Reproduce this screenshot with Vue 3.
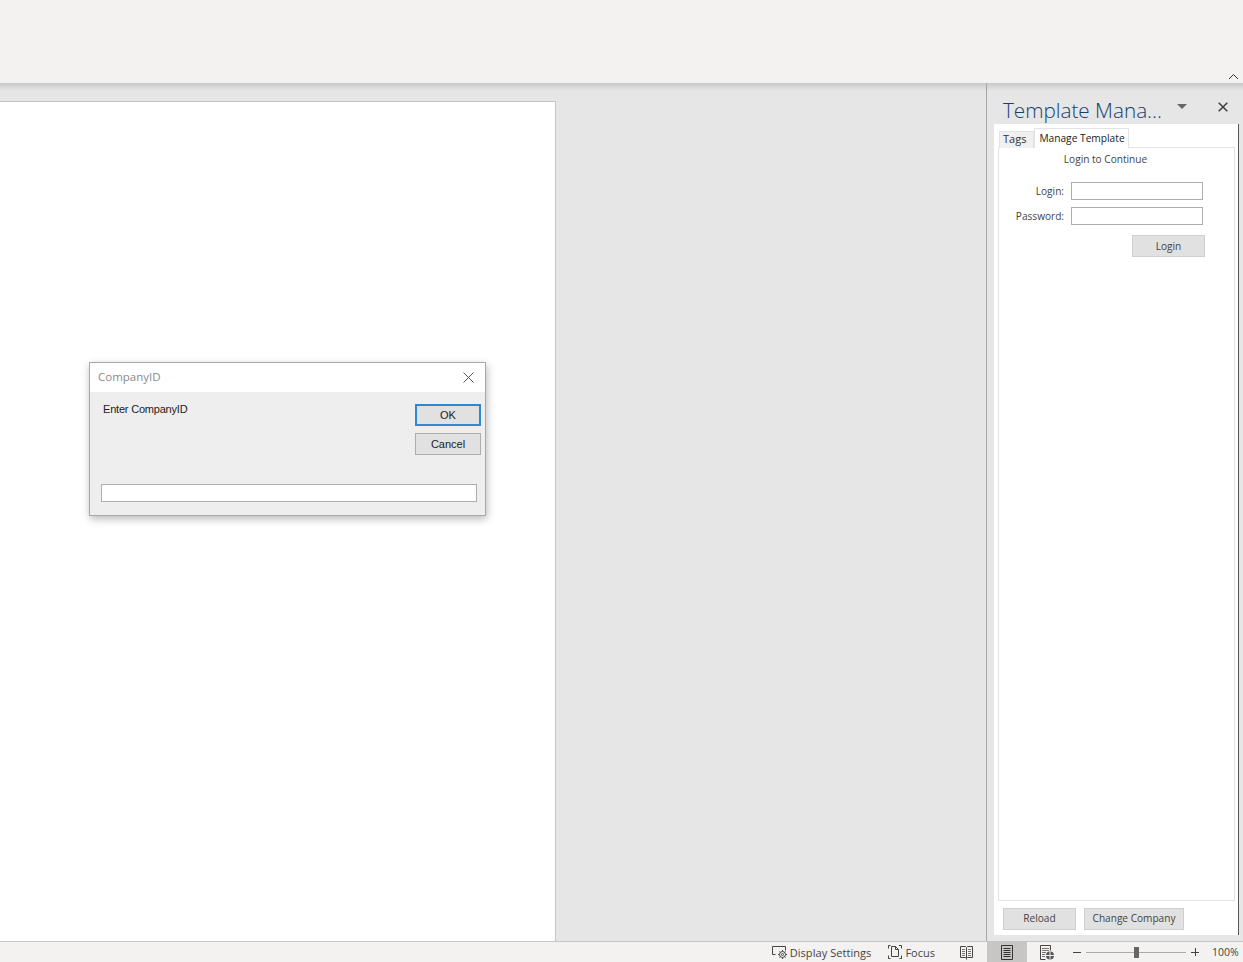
<template>
  <div class="app">
    <div class="ribbon">
      <svg class="collapse" width="11" height="7" viewBox="0 0 11 7"><path d="M1 6l4.500-4.500L10 6" fill="none" stroke="#333" stroke-width="1"/></svg>
    </div>

    <div class="main">
      <div class="doc">
        <div class="page"></div>

        <div class="dialog">
          <div class="dialog-title">
            <span class="dialog-name">CompanyID</span>
            <svg width="11" height="11" viewBox="0 0 11 11"><path d="M.5.5l10 10M10.500.5l-10 10" stroke="#555" stroke-width="1"/></svg>
          </div>
          <div class="dialog-body">
            <div class="dialog-top">
              <div class="prompt">Enter CompanyID</div>
              <div class="dialog-buttons">
                <button class="dlg-btn default">OK</button>
                <button class="dlg-btn">Cancel</button>
              </div>
            </div>
            <input class="dlg-input" />
          </div>
        </div>
      </div>

      <div class="pane">
        <div class="pane-head">
          <span class="pane-title">Template Mana...</span>
          <svg class="pane-menu" width="10" height="5" viewBox="0 0 10 5"><path d="M0 0h10L5 5z" fill="#666"/></svg>
          <svg class="pane-close" width="10" height="10" viewBox="0 0 10 10"><path d="M.7.7l8.600 8.600M9.300.7L.7 9.300" stroke="#444" stroke-width="1.600"/></svg>
        </div>
        <div class="pane-body">
          <div class="tabs">
            <div class="tab">Tags</div>
            <div class="tab active">Manage Template</div>
          </div>
          <div class="tab-panel">
            <div class="login-head">Login to Continue</div>
            <div class="field" v-for="f in fields" :key="f">
              <label>{{ f }}:</label>
              <input class="text" />
            </div>
            <div class="login-row"><button class="btn login">Login</button></div>
          </div>
          <div class="pane-foot">
            <button class="btn reload">Reload</button>
            <button class="btn change">Change Company</button>
          </div>
        </div>
      </div>
    </div>

    <div class="status">
      <div class="status-item display">
        <svg width="16" height="14" viewBox="0 0 16 14" fill="none" stroke="#444">
          <path d="M3.500 9.500h-3v-8h13v4"/>
          <circle cx="10.500" cy="9.500" r="3"/>
          <circle cx="10.500" cy="9.500" r="1"/>
          <path d="M10.500 5v1.500M10.500 12.500V14M6 9.500h1.500M13.500 9.500H15M7.500 6.500l1 1M12.500 11.500l1 1M13.500 6.500l-1 1M8.500 11.500l-1 1"/>
        </svg>
        <span>Display Settings</span>
      </div>
      <div class="status-item focus">
        <svg width="14" height="14" viewBox="0 0 14 14" fill="none" stroke="#444">
          <path d="M.5 3.500v-3h2M13.500 10.500v3h-2M.5 10.500v3h2M11 .5h2.500v3"/>
          <path d="M3.500 11.500v-10h4l3 3v7zM7.500 1.500v3h3"/>
        </svg>
        <span>Focus</span>
      </div>
      <div class="view read">
        <svg width="13" height="15" viewBox="0 0 13 15" fill="none" stroke="#444">
          <path d="M.5 1.500h5l1 1 1-1h5v11h-5l-1 1-1-1h-5zM6.500 2.500v12"/>
          <path d="M2 4.500h3M2 6.500h3M2 8.500h3M2 10.500h3M8 4.500h3M8 6.500h3M8 8.500h3M8 10.500h3" stroke="#777"/>
        </svg>
      </div>
      <div class="view print">
        <svg width="12" height="15" viewBox="0 0 12 15" fill="none" stroke="#333">
          <path d="M.5.5h11v14H.5z"/>
          <path d="M2.500 3.500h7M2.500 5.500h7M2.500 7.500h7M2.500 9.500h7M2.500 11.500h7"/>
        </svg>
      </div>
      <div class="view web">
        <svg width="14" height="15" viewBox="0 0 14 15" fill="none" stroke="#444">
          <path d="M5.500 14.500h-5V.5h10v5"/>
          <path d="M2 3.500h7M2 5.500h7M2 7.500h4M2 9.500h3M2 11.500h3" stroke="#777"/>
          <circle cx="10" cy="10.500" r="4" fill="#555" stroke="none"/>
          <path d="M6 10.500h8M10 6.500v8" stroke="#eee"/>
        </svg>
      </div>
      <div class="zoom">
        <span class="minus"></span>
        <div class="slider"><span class="thumb"></span></div>
        <span class="plus"></span>
      </div>
      <span class="percent">100%</span>
    </div>
  </div>
</template>

<script setup>
const fields = ['Login', 'Password']
</script>

<style>
html, body { margin: 0; }
</style>

<style scoped>
.app {
  width: 1243px;
  height: 962px;
  display: flex;
  flex-direction: column;
  overflow: hidden;
  background: #e6e6e6;
  font-family: "Open Sans", "Noto Sans", sans-serif;
  color: #444;
}

.ribbon {
  height: 83px;
  flex: none;
  background: #f3f2f1;
  display: flex;
  justify-content: flex-end;
  align-items: flex-end;
}
.collapse { margin: 0 4px 3px 0; }

.main {
  flex: 1;
  min-height: 0;
  display: flex;
  background: linear-gradient(#c9c9c9, #e6e6e6 8px);
}

.doc {
  width: 986px;
  flex: none;
  padding-top: 18px;
  position: relative;
  box-sizing: border-box;
}
.page {
  width: 556px;
  height: 100%;
  box-sizing: border-box;
  background: #fff;
  border: 1px solid #c6c6c6;
  border-left: 0;
  border-bottom: 0;
}

.dialog {
  position: absolute;
  left: 89px;
  top: 279px;
  width: 397px;
  height: 154px;
  box-sizing: border-box;
  border: 1px solid #a8a8a8;
  background: #eeeeee;
  box-shadow: 1px 3px 8px rgba(0, 0, 0, .28);
  display: flex;
  flex-direction: column;
}
.dialog-title {
  height: 29px;
  flex: none;
  background: #fff;
  display: flex;
  align-items: center;
  justify-content: space-between;
  padding: 0 11px 0 8px;
  font-size: 11.500px;
  color: #8a8a8a;
}
.dialog-name { margin-top: -2px; }
.dialog-body {
  flex: 1;
  padding: 0 4px 0 11px;
  display: flex;
  flex-direction: column;
  justify-content: space-between;
}
.dialog-top {
  display: flex;
  justify-content: space-between;
  padding-top: 12px;
}
.prompt {
  font: 11px "Liberation Sans", Arial, sans-serif;
  color: #222;
  letter-spacing: -.2px;
  margin: -1px 0 0 2px;
}
.dialog-buttons {
  display: flex;
  flex-direction: column;
  gap: 7px;
}
.dlg-btn {
  width: 66px;
  height: 22px;
  box-sizing: border-box;
  padding: 0;
  background: #e1e1e1;
  border: 1px solid #adadad;
  font: 11px "Liberation Sans", Arial, sans-serif;
  color: #222;
}
.dlg-btn.default {
  border: 2px solid #2b8ad8;
}
.dlg-input {
  width: 376px;
  height: 18px;
  box-sizing: border-box;
  margin: 0 0 13px;
  background: #fff;
  border: 1px solid #adadad;
  padding: 0;
}

.pane {
  flex: 1;
  box-sizing: border-box;
  border-left: 1px solid #a6a6a6;
  padding: 0 4px 6px 7px;
  display: flex;
  flex-direction: column;
}
.pane-head {
  height: 41px;
  flex: none;
  position: relative;
  display: flex;
  align-items: center;
}
.pane-title {
  font-size: 20.700px;
  font-weight: 300;
  color: #17406b;
  margin: 13px 0 0 9px;
  white-space: nowrap;
}
.pane-menu { position: absolute; left: 183px; top: 21px; }
.pane-close { position: absolute; left: 224px; top: 19px; }

.pane-body {
  flex: 1;
  min-height: 0;
  background: #fff;
  padding: 4px 3px 0 4px;
  display: flex;
  flex-direction: column;
  font-size: 10.100px;
  border-right: 1px solid #555;
}
.tabs {
  display: flex;
  align-items: flex-end;
  height: 20px;
  flex: none;
  margin: 0 0 -1px 1px;
  position: relative;
}
.tab {
  height: 17px;
  padding: 0 7px 0 3px;
  box-sizing: border-box;
  background: #f0f0f0;
  border: 1px solid #e3e3e3;
  border-bottom: 0;
  font-size: 11px;
  line-height: 13px;
  color: #333;
}
.tab.active {
  height: 20px;
  background: #fff;
  padding: 0 3px 0 4px;
  font-size: 10.200px;
  line-height: 19px;
  color: #222;
}
.tab-panel {
  flex: 1;
  min-height: 0;
  border: 1px solid #e3e3e3;
}
.login-head {
  text-align: center;
  margin: 4px 22px 14px 0;
  height: 15px;
  line-height: 15px;
  color: #444;
}
.field {
  display: flex;
  align-items: center;
  justify-content: flex-end;
  gap: 7px;
  height: 19px;
  margin: 0 31px 6px 0;
}
.text {
  width: 132px;
  height: 18px;
  box-sizing: border-box;
  border: 1px solid #adadad;
  background: #fff;
  padding: 0;
}
.login-row {
  display: flex;
  justify-content: flex-end;
  margin: 10px 29px 0 0;
}
.btn {
  height: 22px;
  box-sizing: border-box;
  padding: 0 0 2px;
  background: #e1e1e1;
  border: 1px solid #cfcfcf;
  font: 10.100px "Open Sans", "Noto Sans", sans-serif;
  color: #444;
}
.login { width: 73px; padding: 0; }
.pane-foot {
  height: 34px;
  flex: none;
  display: flex;
  gap: 8px;
  padding: 7px 0 0 5px;
  box-sizing: border-box;
}
.reload { width: 73px; }
.change { width: 100px; }

.status {
  height: 21px;
  flex: none;
  box-sizing: border-box;
  background: #f3f2f1;
  border-top: 1px solid #c6c6c6;
  display: flex;
  align-items: center;
  justify-content: flex-end;
  font-size: 11px;
  color: #444;
}
.status-item {
  display: flex;
  align-items: center;
  gap: 2px;
  white-space: nowrap;
}
.display { margin-right: 17px; letter-spacing: .06px; }
.focus { margin-right: 12px; gap: 3px; }
.view {
  width: 40px;
  height: 20px;
  display: flex;
  align-items: center;
  justify-content: center;
}
.read svg { margin-right: 1px; }
.print { background: #c8c6c4; }
.zoom {
  display: flex;
  align-items: center;
  margin-left: 6px;
}
.minus { width: 8px; height: 1px; background: #444; }
.slider {
  width: 100px;
  height: 1px;
  background: #aaa;
  margin: 0 5px;
  position: relative;
}
.thumb {
  position: absolute;
  left: 48px;
  top: -5px;
  width: 5px;
  height: 11px;
  background: #666;
}
.plus {
  width: 8px;
  height: 8px;
  background:
    linear-gradient(#444, #444) center / 8px 1px no-repeat,
    linear-gradient(#444, #444) center / 1px 8px no-repeat;
}
.percent {
  width: 27px;
  margin: 0 4px 0 13px;
  font-size: 10.500px;
}
</style>
